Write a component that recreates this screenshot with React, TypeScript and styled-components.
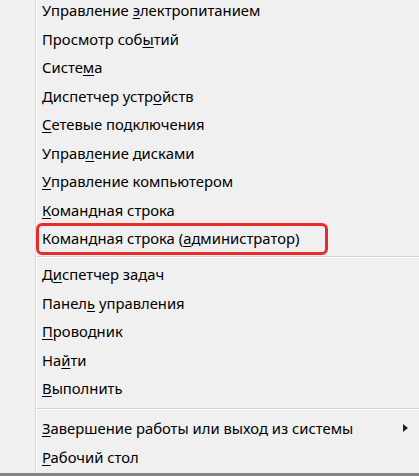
import React from "react";
import styled, { createGlobalStyle } from "styled-components";

const Global = createGlobalStyle`
  html, body { margin: 0; padding: 0; background: #f0f0f0; }
  body { width: 419px; height: 476px; overflow: hidden; }
`;

const Menu = styled.div`
  position: relative;
  width: 419px;
  height: 476px;
  box-sizing: border-box;
  background: #f0f0f0;
  border-bottom: 3px solid #858585;
  display: flex;
  flex-direction: column;
  font-family: "Noto Sans", "Open Sans", sans-serif;
  font-size: 14.8px;
  color: #000;
  overflow: hidden;
  &::before {
    content: "";
    position: absolute;
    left: 35px;
    top: 0;
    bottom: 0;
    width: 1px;
    background: #dcdcdc;
    box-shadow: 1px 0 0 #ffffff;
  }
`;

const Section = styled.div<{ $offset?: number }>`
  display: flex;
  flex-direction: column;
  margin-top: ${(p) => p.$offset ?? 0}px;
`;

const Row = styled.div<{ $marked?: boolean }>`
  position: relative;
  height: 28.5px;
  display: flex;
  align-items: center;
  padding-left: 42px;
  padding-right: 11px;
  white-space: nowrap;
  ${(p) =>
    p.$marked &&
    `
    &::after {
      content: "";
      position: absolute;
      left: 36px;
      top: 0px;
      width: 292px;
      height: 32px;
      box-sizing: border-box;
      border: 3px solid #ea2b2a;
      border-radius: 6px;
      transform: translateY(-1px);
    }
  `}
`;

const Label = styled.span`
  flex: 1;
`;

const Key = styled.span`
  text-decoration: underline;
  text-underline-offset: 2px;
  text-decoration-thickness: 1px;
`;

const Separator = styled.div<{ $h: number }>`
  height: ${(p) => p.$h}px;
  display: flex;
  align-items: center;
  padding-left: 37px;
  &::before {
    content: "";
    flex: 1;
    height: 1px;
    background: #d5d5d5;
    box-shadow: 0 1px 0 #ffffff;
  }
`;

const Arrow = styled.svg`
  width: 5px;
  height: 8px;
  fill: #222;
`;

type Item = { pre: string; key: string; post: string; marked?: boolean; sub?: boolean };

const sec1: Item[] = [
  { pre: "Управление ", key: "э", post: "лектропитанием" },
  { pre: "Просмотр соб", key: "ы", post: "тий" },
  { pre: "Систе", key: "м", post: "а" },
  { pre: "Диспетчер устр", key: "о", post: "йств" },
  { pre: "", key: "С", post: "етевые подключения" },
  { pre: "Управ", key: "л", post: "ение дисками" },
  { pre: "", key: "У", post: "правление компьютером" },
  { pre: "", key: "К", post: "омандная строка" },
  { pre: "Командная строка (", key: "а", post: "дминистратор)", marked: true },
];

const sec2: Item[] = [
  { pre: "Д", key: "и", post: "спетчер задач" },
  { pre: "Панел", key: "ь", post: " управления" },
  { pre: "", key: "П", post: "роводник" },
  { pre: "На", key: "й", post: "ти" },
  { pre: "", key: "В", post: "ыполнить" },
];

const sec3: Item[] = [
  { pre: "", key: "З", post: "авершение работы или выход из системы", sub: true },
  { pre: "", key: "Р", post: "абочий стол" },
];

const renderRow = (it: Item, i: number) => (
  <Row key={i} $marked={it.marked}>
    <Label>
      {it.pre}
      <Key>{it.key}</Key>
      {it.post}
    </Label>
    {it.sub && (
      <Arrow viewBox="0 0 5 8">
        <path d="M0 0 L5 4 L0 8 Z" />
      </Arrow>
    )}
  </Row>
);

export default function App() {
  return (
    <>
      <Global />
      <Menu>
        <Section $offset={-4.25}>{sec1.map(renderRow)}</Section>
        <Separator $h={7.5} />
        <Section>{sec2.map(renderRow)}</Section>
        <Separator $h={11.5} />
        <Section>{sec3.map(renderRow)}</Section>
      </Menu>
    </>
  );
}
